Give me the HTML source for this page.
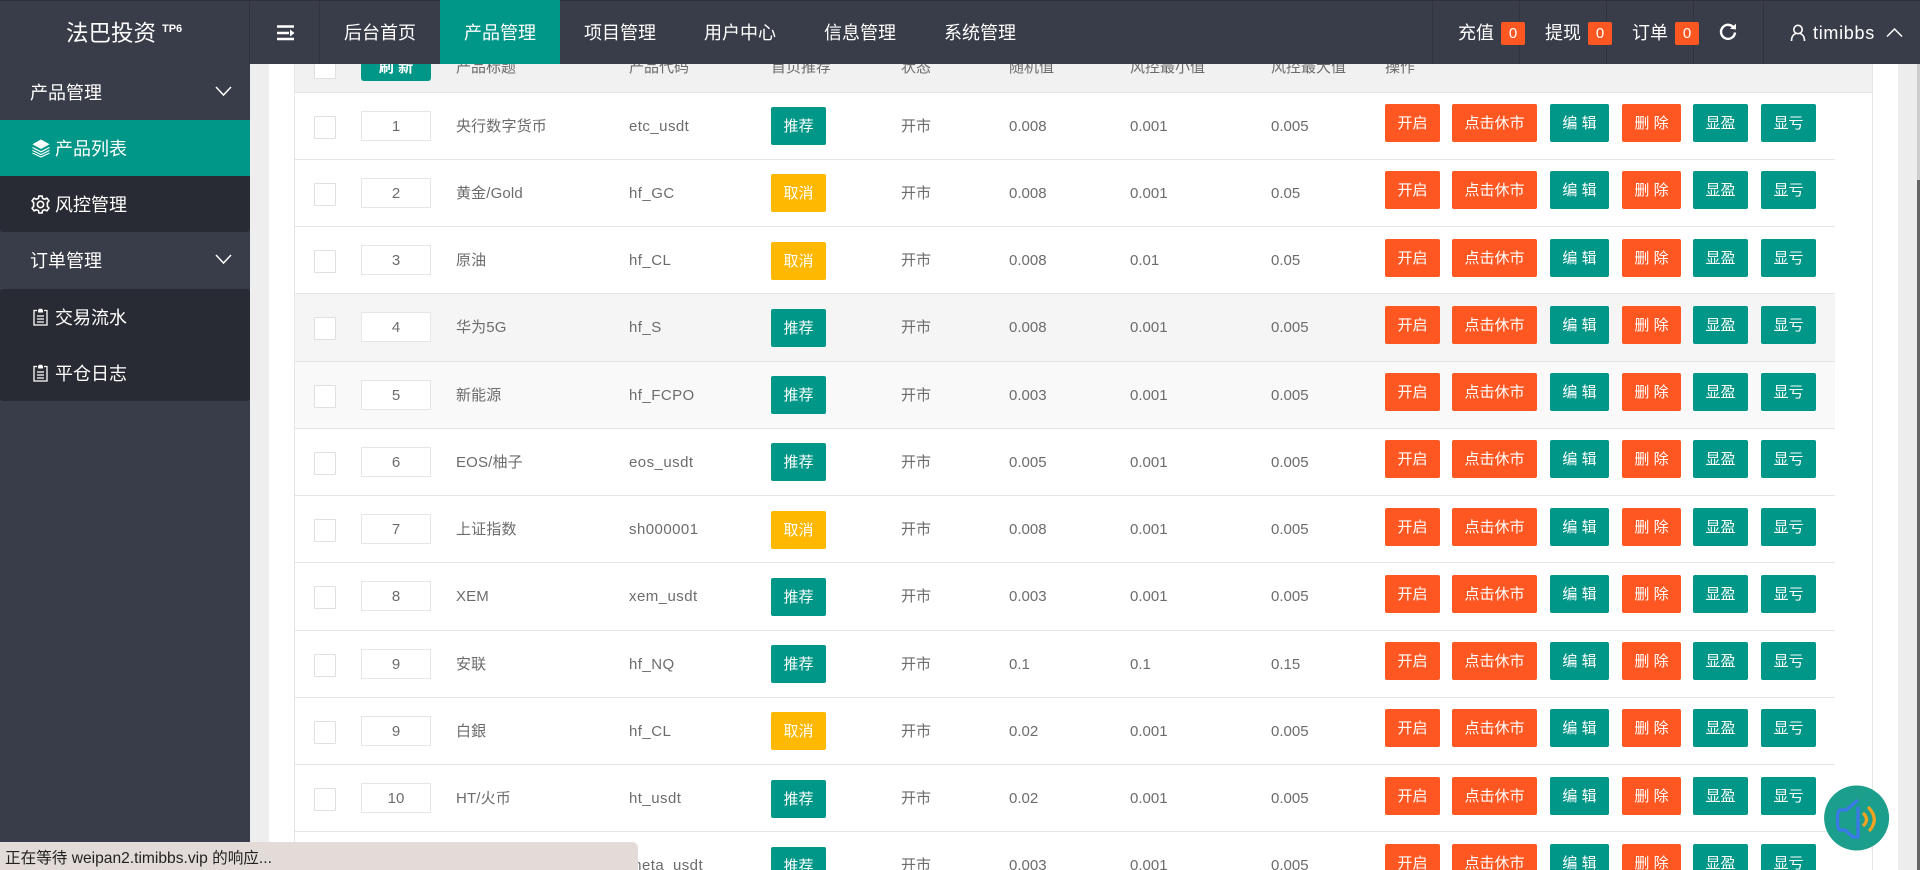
<!DOCTYPE html>
<html lang="zh">
<head>
<meta charset="utf-8">
<title>法巴投资</title>
<style>
*{box-sizing:border-box;margin:0;padding:0}
html,body{width:1920px;height:870px;overflow:hidden;background:#fff}
body{position:relative;font-family:"Liberation Sans","Noto Sans CJK SC",sans-serif;font-size:15px;color:#6c6c6c}
.a{position:absolute;white-space:nowrap}
#hd{position:absolute;left:0;top:0;width:1920px;height:64px;background:#393d49;border-top:1px solid #2f323c;z-index:5;color:#fff}
.nv{position:absolute;top:-1px;height:64px;line-height:66px;font-size:18px;color:#fff;white-space:nowrap}
.vl{position:absolute;top:0;width:1px;height:63px;background:#30333e}
.bd{position:absolute;top:21px;width:24px;height:23px;background:#ff5722;border-radius:2px;text-align:center;line-height:23px;font-size:15px;color:#fff}
#sd{position:absolute;left:0;top:64px;width:250px;height:806px;background:#393d49;color:#fff;font-size:18px;z-index:3}
#sd .i{position:absolute;left:0;width:250px;height:56px;line-height:58px}
#sd .t{position:absolute;top:0}
#sd svg{position:absolute}
#gy{position:absolute;left:250px;top:64px;width:19px;height:806px;background:#eeeeee}
#gr{position:absolute;left:1898px;top:64px;width:19px;height:806px;background:#ededed}
#st{position:absolute;left:1917px;top:64px;width:3px;height:116px;background:#cdcdcd}
#sh{position:absolute;left:1917px;top:180px;width:3px;height:690px;background:#666}
#tl{position:absolute;left:294px;top:64px;width:1px;height:806px;background:#e6e6e6}
#tr{position:absolute;left:1872px;top:64px;width:1px;height:806px;background:#e6e6e6}
#th{position:absolute;left:295px;top:64px;width:1577px;height:29px;background:#f1f1f1;border-bottom:1px solid #e6e6e6}
.th{position:absolute;top:57px;height:22px;line-height:22px;font-size:15px;color:#6c6c6c;white-space:nowrap}
.r{position:absolute;left:295px;width:1540px;height:67.25px;border-bottom:1.5px solid #e6e6e6}
.c,.n,.x,.b{position:absolute}
.c{left:19px;top:23px;width:22px;height:23px;background:#fff;border:1px solid #e0e0e0;border-radius:1px}
.n{left:66px;top:18px;width:70px;height:30px;background:#fff;border:1px solid #e6e6e6;text-align:center;line-height:30px;font-size:15px;color:#6c6c6c}
.x{top:23px;height:22px;line-height:22px;white-space:nowrap}
.x1{left:161px;letter-spacing:.15px}.x2{left:334px;letter-spacing:.45px}.x3{left:606px}.x4{left:714px}.x5{left:835px}.x6{left:976px}
.b{top:11.5px;height:38px;line-height:39px;border-radius:2px;color:#fff;font-size:15px;text-align:center;white-space:nowrap;background:#ff5722}
.g{background:#009688}.y{background:#ffb800}
.f{left:476px;width:55px;top:14.5px}
.b1{left:1090px;width:55px}.b2{left:1157px;width:85px}.b3{left:1255px;width:59px}.b4{left:1327px;width:59px}.b5{left:1398px;width:55px}.b6{left:1466px;width:55px}
#sb{position:absolute;left:0;top:842px;width:638px;height:28px;background:#e2dbd7;border-radius:0 6px 0 0;z-index:8;font-size:15.6px;color:#222;line-height:33px;padding-left:5px;white-space:nowrap}
#vo{position:absolute;left:1820px;top:770px;z-index:7}
</style>
</head>
<body>
<div id="gy"></div><div id="gr"></div><div id="st"></div><div id="sh"></div><div id="tl"></div><div id="tr"></div>

<div id="th"></div>
<div class="a" style="left:314px;top:58px;width:22px;height:21px;background:#fff;border:1px solid #e0e0e0"></div>
<div class="a g" style="left:361px;top:58px;width:70px;height:23px;border-radius:0 0 3px 3px;color:#fff;font-size:15px;font-weight:bold;text-align:center;line-height:20px">刷 新</div>
<div class="th" style="left:456px">产品标题</div>
<div class="th" style="left:629px">产品代码</div>
<div class="th" style="left:771px">首页推荐</div>
<div class="th" style="left:901px">状态</div>
<div class="th" style="left:1009px">随机值</div>
<div class="th" style="left:1130px">风控最小值</div>
<div class="th" style="left:1271px">风控最大值</div>
<div class="th" style="left:1385px">操作</div>

<div class="r" style="top:92.6px"><div class="c"></div><div class="n">1</div><div class="x x1">央行数字货币</div><div class="x x2">etc_usdt</div><div class="b f g">推荐</div><div class="x x3">开市</div><div class="x x4">0.008</div><div class="x x5">0.001</div><div class="x x6">0.005</div><div class="b b1">开启</div><div class="b b2">点击休市</div><div class="b b3 g">编 辑</div><div class="b b4">删 除</div><div class="b b5 g">显盈</div><div class="b b6 g">显亏</div></div>
<div class="r" style="top:159.85px"><div class="c"></div><div class="n">2</div><div class="x x1">黄金/Gold</div><div class="x x2">hf_GC</div><div class="b f y">取消</div><div class="x x3">开市</div><div class="x x4">0.008</div><div class="x x5">0.001</div><div class="x x6">0.05</div><div class="b b1">开启</div><div class="b b2">点击休市</div><div class="b b3 g">编 辑</div><div class="b b4">删 除</div><div class="b b5 g">显盈</div><div class="b b6 g">显亏</div></div>
<div class="r" style="top:227.1px"><div class="c"></div><div class="n">3</div><div class="x x1">原油</div><div class="x x2">hf_CL</div><div class="b f y">取消</div><div class="x x3">开市</div><div class="x x4">0.008</div><div class="x x5">0.01</div><div class="x x6">0.05</div><div class="b b1">开启</div><div class="b b2">点击休市</div><div class="b b3 g">编 辑</div><div class="b b4">删 除</div><div class="b b5 g">显盈</div><div class="b b6 g">显亏</div></div>
<div class="r" style="top:294.35px;background:#f5f5f5"><div class="c"></div><div class="n">4</div><div class="x x1">华为5G</div><div class="x x2">hf_S</div><div class="b f g">推荐</div><div class="x x3">开市</div><div class="x x4">0.008</div><div class="x x5">0.001</div><div class="x x6">0.005</div><div class="b b1">开启</div><div class="b b2">点击休市</div><div class="b b3 g">编 辑</div><div class="b b4">删 除</div><div class="b b5 g">显盈</div><div class="b b6 g">显亏</div></div>
<div class="r" style="top:361.6px;background:#f9f9f9"><div class="c"></div><div class="n">5</div><div class="x x1">新能源</div><div class="x x2">hf_FCPO</div><div class="b f g">推荐</div><div class="x x3">开市</div><div class="x x4">0.003</div><div class="x x5">0.001</div><div class="x x6">0.005</div><div class="b b1">开启</div><div class="b b2">点击休市</div><div class="b b3 g">编 辑</div><div class="b b4">删 除</div><div class="b b5 g">显盈</div><div class="b b6 g">显亏</div></div>
<div class="r" style="top:428.85px"><div class="c"></div><div class="n">6</div><div class="x x1">EOS/柚子</div><div class="x x2">eos_usdt</div><div class="b f g">推荐</div><div class="x x3">开市</div><div class="x x4">0.005</div><div class="x x5">0.001</div><div class="x x6">0.005</div><div class="b b1">开启</div><div class="b b2">点击休市</div><div class="b b3 g">编 辑</div><div class="b b4">删 除</div><div class="b b5 g">显盈</div><div class="b b6 g">显亏</div></div>
<div class="r" style="top:496.1px"><div class="c"></div><div class="n">7</div><div class="x x1">上证指数</div><div class="x x2">sh000001</div><div class="b f y">取消</div><div class="x x3">开市</div><div class="x x4">0.008</div><div class="x x5">0.001</div><div class="x x6">0.005</div><div class="b b1">开启</div><div class="b b2">点击休市</div><div class="b b3 g">编 辑</div><div class="b b4">删 除</div><div class="b b5 g">显盈</div><div class="b b6 g">显亏</div></div>
<div class="r" style="top:563.35px"><div class="c"></div><div class="n">8</div><div class="x x1">XEM</div><div class="x x2">xem_usdt</div><div class="b f g">推荐</div><div class="x x3">开市</div><div class="x x4">0.003</div><div class="x x5">0.001</div><div class="x x6">0.005</div><div class="b b1">开启</div><div class="b b2">点击休市</div><div class="b b3 g">编 辑</div><div class="b b4">删 除</div><div class="b b5 g">显盈</div><div class="b b6 g">显亏</div></div>
<div class="r" style="top:630.6px"><div class="c"></div><div class="n">9</div><div class="x x1">安联</div><div class="x x2">hf_NQ</div><div class="b f g">推荐</div><div class="x x3">开市</div><div class="x x4">0.1</div><div class="x x5">0.1</div><div class="x x6">0.15</div><div class="b b1">开启</div><div class="b b2">点击休市</div><div class="b b3 g">编 辑</div><div class="b b4">删 除</div><div class="b b5 g">显盈</div><div class="b b6 g">显亏</div></div>
<div class="r" style="top:697.85px"><div class="c"></div><div class="n">9</div><div class="x x1">白銀</div><div class="x x2">hf_CL</div><div class="b f y">取消</div><div class="x x3">开市</div><div class="x x4">0.02</div><div class="x x5">0.001</div><div class="x x6">0.005</div><div class="b b1">开启</div><div class="b b2">点击休市</div><div class="b b3 g">编 辑</div><div class="b b4">删 除</div><div class="b b5 g">显盈</div><div class="b b6 g">显亏</div></div>
<div class="r" style="top:765.1px"><div class="c"></div><div class="n">10</div><div class="x x1">HT/火币</div><div class="x x2">ht_usdt</div><div class="b f g">推荐</div><div class="x x3">开市</div><div class="x x4">0.02</div><div class="x x5">0.001</div><div class="x x6">0.005</div><div class="b b1">开启</div><div class="b b2">点击休市</div><div class="b b3 g">编 辑</div><div class="b b4">删 除</div><div class="b b5 g">显盈</div><div class="b b6 g">显亏</div></div>
<div class="r" style="top:832.35px;border-bottom:0"><div class="x x2">meta_usdt</div><div class="b f g">推荐</div><div class="x x3">开市</div><div class="x x4">0.003</div><div class="x x5">0.001</div><div class="x x6">0.005</div><div class="b b1">开启</div><div class="b b2">点击休市</div><div class="b b3 g">编 辑</div><div class="b b4">删 除</div><div class="b b5 g">显盈</div><div class="b b6 g">显亏</div></div>

<div id="hd">
  <div class="nv" style="left:66px;top:0;font-size:22.5px">法巴投资</div>
  <div class="nv" style="left:162px;top:-5px;font-size:11px;font-weight:bold">TP6</div>
  <div class="vl" style="left:249px"></div>
  <svg class="a" style="left:276px;top:23px" width="20" height="18" viewBox="0 0 20 18"><path d="M1 2.5H18M1 9H13M1 15H18" stroke="#fff" stroke-width="2.4" fill="none"/><path d="M14 5.5L18.5 9L14 12.5Z" fill="#fff"/></svg>
  <div class="vl" style="left:319px"></div>
  <div class="nv" style="left:344px">后台首页</div>
  <div class="a" style="left:440px;top:-1px;width:120px;height:64px;background:#009688"></div>
  <div class="nv" style="left:464px">产品管理</div>
  <div class="nv" style="left:584px">项目管理</div>
  <div class="nv" style="left:704px">用户中心</div>
  <div class="nv" style="left:824px">信息管理</div>
  <div class="nv" style="left:944px">系统管理</div>
  <div class="vl" style="left:1432px"></div><div class="vl" style="left:1519px"></div><div class="vl" style="left:1606px"></div><div class="vl" style="left:1693px"></div><div class="vl" style="left:1763px"></div>
  <div class="nv" style="left:1458px">充值</div><div class="bd" style="left:1501px">0</div>
  <div class="nv" style="left:1545px">提现</div><div class="bd" style="left:1588px">0</div>
  <div class="nv" style="left:1632px">订单</div><div class="bd" style="left:1675px">0</div>
  <svg class="a" style="left:1719px;top:22px" width="18" height="18" viewBox="0 0 18 18"><path d="M15 5.2A7 7 0 1 0 16 9.5" stroke="#fff" stroke-width="2.4" fill="none"/><path d="M11 5.8L17 6.5L17 .8Z" fill="#fff"/></svg>
  <svg class="a" style="left:1790px;top:23px" width="16" height="18" viewBox="0 0 16 18"><circle cx="8" cy="5.5" r="4.2" stroke="#fff" stroke-width="1.6" fill="none"/><path d="M1.5 17C1.5 12 4 10 6 9.5M14.5 17C14.5 12 12 10 10 9.5" stroke="#fff" stroke-width="1.6" fill="none"/></svg>
  <div class="nv" style="left:1813px;letter-spacing:.7px">timibbs</div>
  <svg class="a" style="left:1886px;top:26px" width="17" height="11" viewBox="0 0 17 11"><path d="M1 9.5L8.5 2L16 9.5" stroke="#fff" stroke-width="1.5" fill="none"/></svg>
</div>

<div id="sd">
  <div class="i" style="top:0"><span class="t" style="left:30px">产品管理</span><svg style="left:215px;top:21px" width="17" height="12" viewBox="0 0 17 12"><path d="M1 2L8.5 10L16 2" stroke="#fff" stroke-width="1.5" fill="none"/></svg></div>
  <div class="i" style="top:56px;background:#009688"><svg style="left:32px;top:19px" width="18" height="19" viewBox="0 0 19 19"><path d="M9.5 0L18.5 5L9.5 10L.5 5Z" fill="#fff"/><path d="M.5 8.5L9.5 13L18.5 8.5M.5 11.5L9.5 16L18.5 11.5M.5 14.2L9.5 18.5L18.5 14.2" stroke="#fff" stroke-width="1.2" fill="none"/></svg><span class="t" style="left:55px">产品列表</span></div>
  <div class="i" style="top:112px;background:#282b33;border-radius:0 0 3px 3px"><svg style="left:31px;top:19px" width="19" height="19" viewBox="0 0 18 18"><circle cx="9" cy="9" r="3" stroke="#fff" stroke-width="1.5" fill="none"/><path d="M7.5 1H10.5L11 3.2L13 4L15 3L17 5.5L15.5 7.2V10.8L17 12.5L15 15L13 14L11 14.8L10.5 17H7.5L7 14.8L5 14L3 15L1 12.5L2.5 10.8V7.2L1 5.5L3 3L5 4L7 3.2Z" stroke="#fff" stroke-width="1.5" fill="none"/></svg><span class="t" style="left:55px">风控管理</span></div>
  <div class="i" style="top:168px"><span class="t" style="left:30px">订单管理</span><svg style="left:215px;top:21px" width="17" height="12" viewBox="0 0 17 12"><path d="M1 2L8.5 10L16 2" stroke="#fff" stroke-width="1.5" fill="none"/></svg></div>
  <div class="a" style="left:0;top:225px;width:250px;height:112px;background:#282b33;border-radius:3px"></div>
  <div class="i" style="top:225px"><svg style="left:33px;top:19px" width="15" height="18" viewBox="0 0 15 18"><path d="M4 2.5H1V17H14V2.5H11" stroke="#fff" stroke-width="1.3" fill="none"/><path d="M5 2.5L6 .8H9L10 2.5V4.5H5Z" fill="#fff"/><path d="M4 8H11M4 11H11M4 14H11" stroke="#fff" stroke-width="1.2"/></svg><span class="t" style="left:55px">交易流水</span></div>
  <div class="i" style="top:281px"><svg style="left:33px;top:19px" width="15" height="18" viewBox="0 0 15 18"><path d="M4 2.5H1V17H14V2.5H11" stroke="#fff" stroke-width="1.3" fill="none"/><path d="M5 2.5L6 .8H9L10 2.5V4.5H5Z" fill="#fff"/><path d="M4 8H11M4 11H11M4 14H11" stroke="#fff" stroke-width="1.2"/></svg><span class="t" style="left:55px">平仓日志</span></div>
</div>

<svg id="vo" width="80" height="100" viewBox="0 0 80 100"><circle cx="36.6" cy="48" r="32.5" fill="#1c9e8c"/><path d="M37 31L26 40H20Q17.5 40 17.5 50Q17.5 60 20 60H25L33 67H38M38 38V67" stroke="#3a78e8" stroke-width="3.2" fill="none" stroke-linecap="round" stroke-linejoin="round"/><path d="M44 44Q49 49.5 44 55M49 38Q59 49 50 60" stroke="#f5a31f" stroke-width="3.2" fill="none" stroke-linecap="round"/></svg>

<div id="sb">正在等待 weipan2.timibbs.vip 的响应...</div>
</body>
</html>
